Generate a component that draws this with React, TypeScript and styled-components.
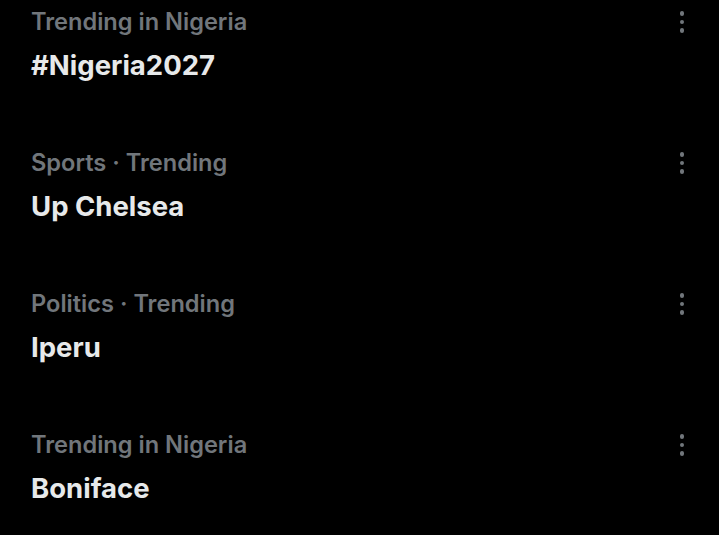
import styled, { createGlobalStyle } from "styled-components";

const GlobalStyle = createGlobalStyle`
  html, body {
    margin: 0;
    padding: 0;
    background: #000;
  }
  body {
    font-family: Inter, "Noto Sans", "Liberation Sans", sans-serif;
    -webkit-font-smoothing: antialiased;
  }
`;

const TRENDS = [
  { category: "Trending in Nigeria", title: "#Nigeria2027" },
  { category: "Sports · Trending", title: "Up Chelsea" },
  { category: "Politics · Trending", title: "Iperu" },
  { category: "Trending in Nigeria", title: "Boniface" },
];

const List = styled.div`
  display: flex;
  flex-direction: column;
  width: 719px;
  height: 535px;
  background: #000;
  overflow: hidden;
`;

const Row = styled.div`
  display: flex;
  align-items: flex-start;
  height: 141px;
  flex-shrink: 0;
  padding: 8px 35px 0 31px;
  box-sizing: border-box;
`;

const Body = styled.div`
  flex: 1;
  display: flex;
  flex-direction: column;
  gap: 11px;
`;

const Category = styled.span`
  font-size: 23.6px;
  line-height: 28px;
  font-weight: 600;
  color: #71767b;
`;

const Title = styled.span`
  font-size: 27.5px;
  line-height: 36px;
  font-weight: 700;
  color: #e7e9ea;
`;

const MoreButton = styled.button`
  display: flex;
  flex-direction: column;
  align-items: center;
  gap: 4px;
  margin-top: 3px;
  padding: 0;
  border: none;
  background: none;
  cursor: pointer;
`;

const Dot = styled.span`
  width: 4.5px;
  height: 4.5px;
  border-radius: 50%;
  background: #71767b;
`;

export default function App() {
  return (
    <>
      <GlobalStyle />
      <List>
        {TRENDS.map((t, i) => (
          <Row key={i}>
            <Body>
              <Category>{t.category}</Category>
              <Title>{t.title}</Title>
            </Body>
            <MoreButton aria-label="More">
              <Dot />
              <Dot />
              <Dot />
            </MoreButton>
          </Row>
        ))}
      </List>
    </>
  );
}
